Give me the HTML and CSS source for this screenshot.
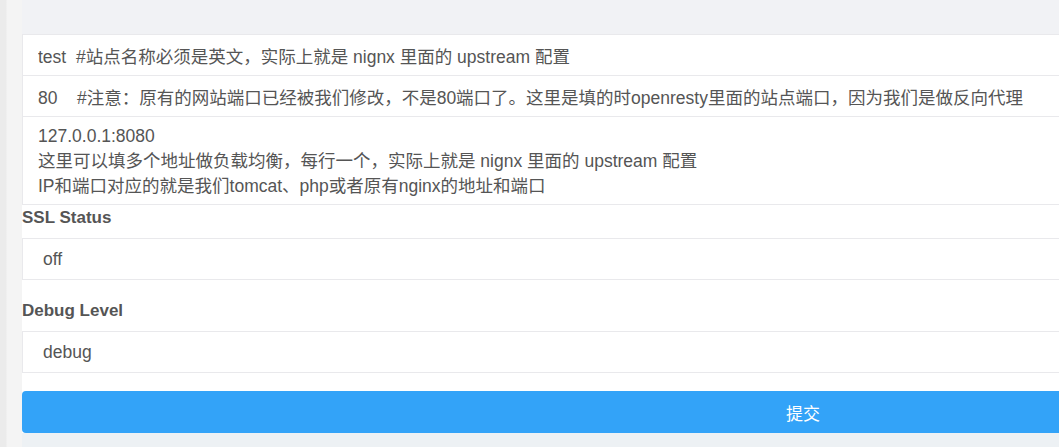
FILE: index.html
```html
<!DOCTYPE html>
<html lang="zh-CN">
<head>
  <meta charset="UTF-8">
  <meta name="viewport" content="width=device-width, initial-scale=1.0">
  <title>站点配置</title>
  <link rel="stylesheet" href="styles.css">
</head>
<body>
  <div class="page">
    <div class="side"></div>

    <div class="main">
      <form class="site-form">
        <input class="field" type="text" value="test  #站点名称必须是英文，实际上就是 nignx 里面的 upstream 配置">
        <input class="field" type="text" value="80    #注意：原有的网站端口已经被我们修改，不是80端口了。这里是填的时openresty里面的站点端口，因为我们是做反向代理">
        <textarea class="field area" rows="3">127.0.0.1:8080
这里可以填多个地址做负载均衡，每行一个，实际上就是 nignx 里面的 upstream 配置
IP和端口对应的就是我们tomcat、php或者原有nginx的地址和端口</textarea>

        <!-- SSL -->
        <label class="label first">SSL Status</label>
        <select class="field select">
          <option>off</option>
          <option>on</option>
        </select>

        <!-- Debug -->
        <label class="label">Debug Level</label>
        <select class="field select">
          <option>debug</option>
          <option>info</option>
          <option>error</option>
        </select>

        <button type="submit" class="submit">提交</button>
      </form>
      <div class="foot"></div>
    </div>
  </div>
</body>
</html>
```

FILE: styles.css
```css
body {
  margin: 0;
  background-color: #f1f2f5;
  font-family: "Liberation Sans", "Noto Sans CJK SC", sans-serif;
  color: #555;
  overflow: hidden;
}

.page {
  display: flex;
  min-height: 447px;
}

/* left grey strip */
.side {
  flex: 0 0 22px;
  background: linear-gradient(to right, #ebebeb 0, #ebebeb 6px, #f4f4f4 7px, #f4f4f4 100%);
}

.main {
  flex: 0 0 1562px;
  padding-top: 34px;
}

.site-form {
  background-color: #fff;
  display: flex;
  flex-direction: column;
}

.field {
  display: block;
  width: 100%;
  box-sizing: border-box;
  height: 42px;
  margin: 0 0 -1px 0;
  padding: 0 15px;
  border: 1px solid #e9e9ec;
  border-radius: 0;
  background-color: #fff;
  color: #555;
  font-family: "Liberation Sans", "Noto Sans CJK SC", sans-serif;
  font-size: 17.5px;
  white-space: pre;
  outline: none;
}

.area {
  height: 89px;
  padding: 7px 15px 5px;
  line-height: 25px;
  resize: none;
  overflow: hidden;
}

.select {
  appearance: none;
  -webkit-appearance: none;
  padding: 0 20px;
  margin-bottom: 0;
}

.label {
  display: block;
  font-weight: bold;
  font-size: 17px;
  line-height: 20px;
  color: #555;
  margin: 21px 0 10px;
}

.label.first {
  margin-top: 4px;
}

.submit {
  margin-top: 18px;
  height: 42px;
  border: none;
  border-radius: 4px;
  background-color: #33a3f8;
  color: #fff;
  font-family: "Liberation Sans", "Noto Sans CJK SC", sans-serif;
  font-size: 17px;
  cursor: pointer;
}

.foot {
  height: 14px;
  background-color: #edf1f4;
}
```
